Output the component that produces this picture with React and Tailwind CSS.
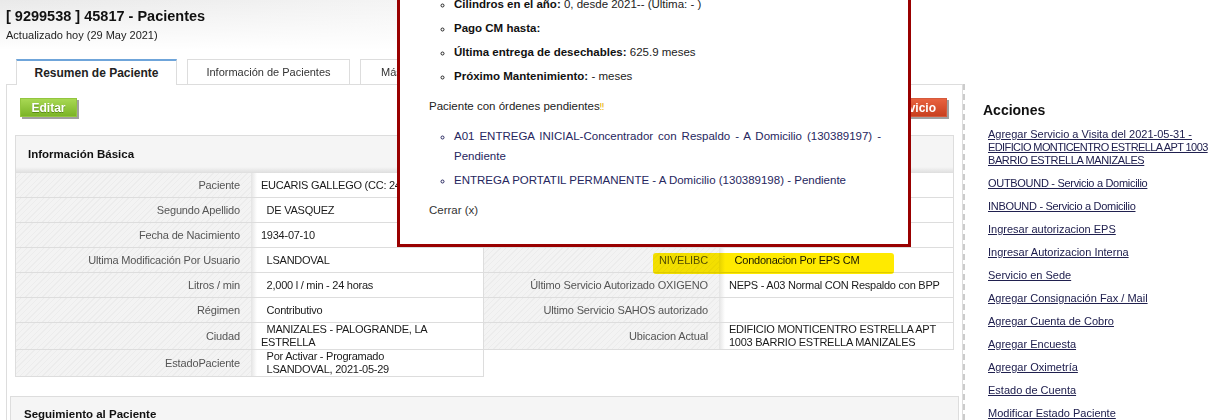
import React from 'react';

const NB = '\u00a0\u00a0';

const leftRows = [
  { label: 'Paciente', lines: ['EUCARIS GALLEGO (CC: 24318577)'] },
  { label: 'Segundo Apellido', lines: [NB + 'DE VASQUEZ'] },
  { label: 'Fecha de Nacimiento', lines: ['1934-07-10'] },
  { label: 'Ultima Modificación Por Usuario', lines: [NB + 'LSANDOVAL'] },
  { label: 'Litros / min', lines: [NB + '2,000 l / min - 24 horas'] },
  { label: 'Régimen', lines: [NB + 'Contributivo'] },
  { label: 'Ciudad', lines: [NB + 'MANIZALES - PALOGRANDE, LA', 'ESTRELLA'], tall: true },
  { label: 'EstadoPaciente', lines: [NB + 'Por Activar - Programado', NB + 'LSANDOVAL, 2021-05-29'], tall: true },
];

// first three rows sit under the popup
const rightRows = [
  { label: '', lines: [''] },
  { label: '', lines: [''] },
  { label: '', lines: [''] },
  { label: 'NIVELIBC', lines: [NB + 'Condonacion Por EPS CM'] },
  { label: 'Último Servicio Autorizado OXIGENO', lines: ['NEPS - A03 Normal CON Respaldo con BPP'] },
  { label: 'Ultimo Servicio SAHOS autorizado', lines: [''] },
  { label: 'Ubicacion Actual', lines: ['EDIFICIO MONTICENTRO ESTRELLA APT', '1003 BARRIO ESTRELLA MANIZALES'], tall: true },
];

const acciones = [
  { text: 'OUTBOUND - Servicio a Domicilio', tight: true },
  { text: 'INBOUND - Servicio a Domicilio', tight: true },
  { text: 'Ingresar autorizacion EPS' },
  { text: 'Ingresar Autorizacion Interna' },
  { text: 'Servicio en Sede' },
  { text: 'Agregar Consignación Fax / Mail' },
  { text: 'Agregar Cuenta de Cobro' },
  { text: 'Agregar Encuesta' },
  { text: 'Agregar Oximetría' },
  { text: 'Estado de Cuenta' },
  { text: 'Modificar Estado Paciente' },
];

function Row({ label, lines, tall }) {
  return (
    <div className={`grid grid-cols-[235px_1fr] border-b border-[#dddddd] ${tall ? 'h-[27px]' : 'h-[25px]'}`}>
      <div className="flex items-center justify-end pr-[11px] text-[11px] tracking-[-0.15px] text-[#555555] bg-[repeating-linear-gradient(-45deg,#f3f3f3_0px,#f3f3f3_3px,#ececec_3px,#ececec_4px)]">
        {label}
      </div>
      <div className="flex flex-col justify-center pl-[10px] text-[11px] leading-[13px] tracking-[-0.25px] text-[#1a1a1a] bg-[linear-gradient(to_right,#e4e4e4,#ffffff_6px)]">
        {lines.map((l, i) => (
          <span key={i} className="whitespace-pre">{l}</span>
        ))}
      </div>
    </div>
  );
}

export default function App() {
  return (
    <div className="relative w-[1225px] h-[420px] overflow-hidden bg-white font-['Liberation_Sans',Arial,sans-serif] text-[#222222]">
      <div className="flex">
        {/* main column */}
        <div className="w-[963px] shrink-0">
          <div className="h-[59px] bg-[linear-gradient(to_bottom,rgba(255,255,255,0)_0px,#ffffff_50px),linear-gradient(to_right,#e9e9e9,#ffffff_800px)] pt-[7px] pl-[6px]">
            <h1 className="text-[14.5px] leading-[18px] font-bold text-[#111111]">[ 9299538 ] 45817 - Pacientes</h1>
            <p className="mt-[3px] text-[11px] leading-[14px] text-[#222222]">Actualizado hoy (29 May 2021)</p>
          </div>

          <div className="flex items-start gap-[10px] pl-[16px] h-[25px]">
            <div className="relative z-10 h-[26px] w-[161px] -mb-px bg-white border-x border-[#dddddd] border-t-2 border-t-[#6fa5da] flex items-center justify-center text-[12px] font-bold text-[#222222]">
              Resumen de Paciente
            </div>
            <div className="h-[25px] w-[163px] bg-white border-x border-t border-[#dddddd] flex items-center justify-center text-[11px] text-[#333333]">
              Información de Pacientes
            </div>
            <div className="h-[25px] w-[163px] bg-white border-x border-t border-[#dddddd] flex items-center pl-[20px] text-[11px] text-[#333333]">
              Más Información
            </div>
          </div>

          <div className="ml-[6px] w-[957px] h-[340px] border-x border-t border-[#dddddd]">
            <div className="mt-[13px] flex justify-between pl-[13px] pr-[15px]">
              <button className="h-[19px] w-[57px] border border-[#93c63f] bg-[linear-gradient(to_bottom,#a8d853,#7bb428)] shadow-[2px_2px_0_#a0a0a0] text-white text-[12px] font-bold leading-none [text-shadow:0_1px_0_#5a8a18]">
                Editar
              </button>
              <button className="h-[19px] px-[10px] border border-[#d55a3c] bg-[linear-gradient(to_bottom,#e8623f,#c8401f)] shadow-[2px_2px_0_#a0a0a0] text-white text-[12px] font-bold leading-none">
                Nuevo Servicio
              </button>
            </div>

            <div className="ml-[8px] mt-[18px] w-[939px]">
              <div className="h-[38px] border-x border-t border-[#dddddd] bg-[linear-gradient(to_bottom,#f5f5f5_0px,#f5f5f5_31px,#dedede_37px)] pl-[12px] pt-[11px] text-[11.5px] leading-[14px] font-bold text-[#111111]">
                Información Básica
              </div>
              <div className="flex items-start">
                <div className="w-[469px] border-x border-[#dddddd]">
                  {leftRows.map((r, i) => (
                    <Row key={i} {...r} />
                  ))}
                </div>
                <div className="w-[470px] border-r border-[#dddddd]">
                  {rightRows.map((r, i) => (
                    <Row key={i} {...r} />
                  ))}
                </div>
              </div>
            </div>

            <div className="ml-[3px] mt-[19px] w-[949px] h-[60px] border border-[#dddddd] bg-[#f5f5f5] pl-[13px] pt-[11px] text-[11.5px] leading-[13px] font-bold text-[#111111]">
              Seguimiento al Paciente
            </div>
          </div>
        </div>

        {/* sidebar */}
        <div className="mt-[84px] flex-1 h-[336px] border-l-2 border-dashed border-[#cccccc] pl-[18px] pt-[18px]">
          <h2 className="text-[14px] leading-[17px] font-bold text-[#111111]">Acciones</h2>
          <ul className="mt-[9px] pl-[5px] flex flex-col gap-[10px] text-[11px] leading-[13px]">
            <li>
              <a href="#" className="text-[#20204f] underline whitespace-nowrap">
                Agregar Servicio a Visita del 2021-05-31 -<br />
                <span className="tracking-[-0.6px]">EDIFICIO MONTICENTRO ESTRELLA APT 1003</span><br />
                <span className="tracking-[-0.4px]">BARRIO ESTRELLA MANIZALES</span>
              </a>
            </li>
            {acciones.map((a) => (
              <li key={a.text}>
                <a href="#" className={`text-[#20204f] underline ${a.tight ? 'tracking-[-0.3px]' : ''}`}>{a.text}</a>
              </li>
            ))}
          </ul>
        </div>
      </div>

      {/* highlight annotation */}
      <div className="absolute left-[653px] top-[253px] w-[241px] h-[21px] rounded-[3px] bg-[#ffea00] mix-blend-multiply" />

      {/* popup */}
      <div className="absolute left-[397px] top-[-17px] w-[514px] border-[3px] border-[#990000] bg-white pl-[29px] pr-[27px] pt-[6px] pb-[24px] text-[11.5px] text-[#222222]">
        <ul className="list-[circle] pl-[25px] leading-[24px]">
          <li><b className="text-[#111111]">Cilindros en el año:</b> 0, desde 2021-- (Última: - )</li>
          <li><b className="text-[#111111]">Pago CM hasta:</b></li>
          <li><b className="text-[#111111]">Última entrega de desechables:</b> 625.9 meses</li>
          <li><b className="text-[#111111]">Próximo Mantenimiento:</b> - meses</li>
        </ul>
        <p className="mt-[6px] leading-[24px]">
          Paciente con órdenes pendientes<span className="text-[9px] text-[#e8b000] font-['DejaVu_Sans',sans-serif]">‼</span>
        </p>
        <ul className="mt-[7px] list-[circle] pl-[25px] leading-[20px] text-[#26265e] flex flex-col gap-[4px]">
          <li className="text-justify">A01 ENTREGA INICIAL-Concentrador con Respaldo - A Domicilio (130389197) - Pendiente</li>
          <li>ENTREGA PORTATIL PERMANENTE - A Domicilio (130389198) - Pendiente</li>
        </ul>
        <p className="mt-[10px] leading-[20px] text-[#333333]">Cerrar (x)</p>
      </div>
    </div>
  );
}
